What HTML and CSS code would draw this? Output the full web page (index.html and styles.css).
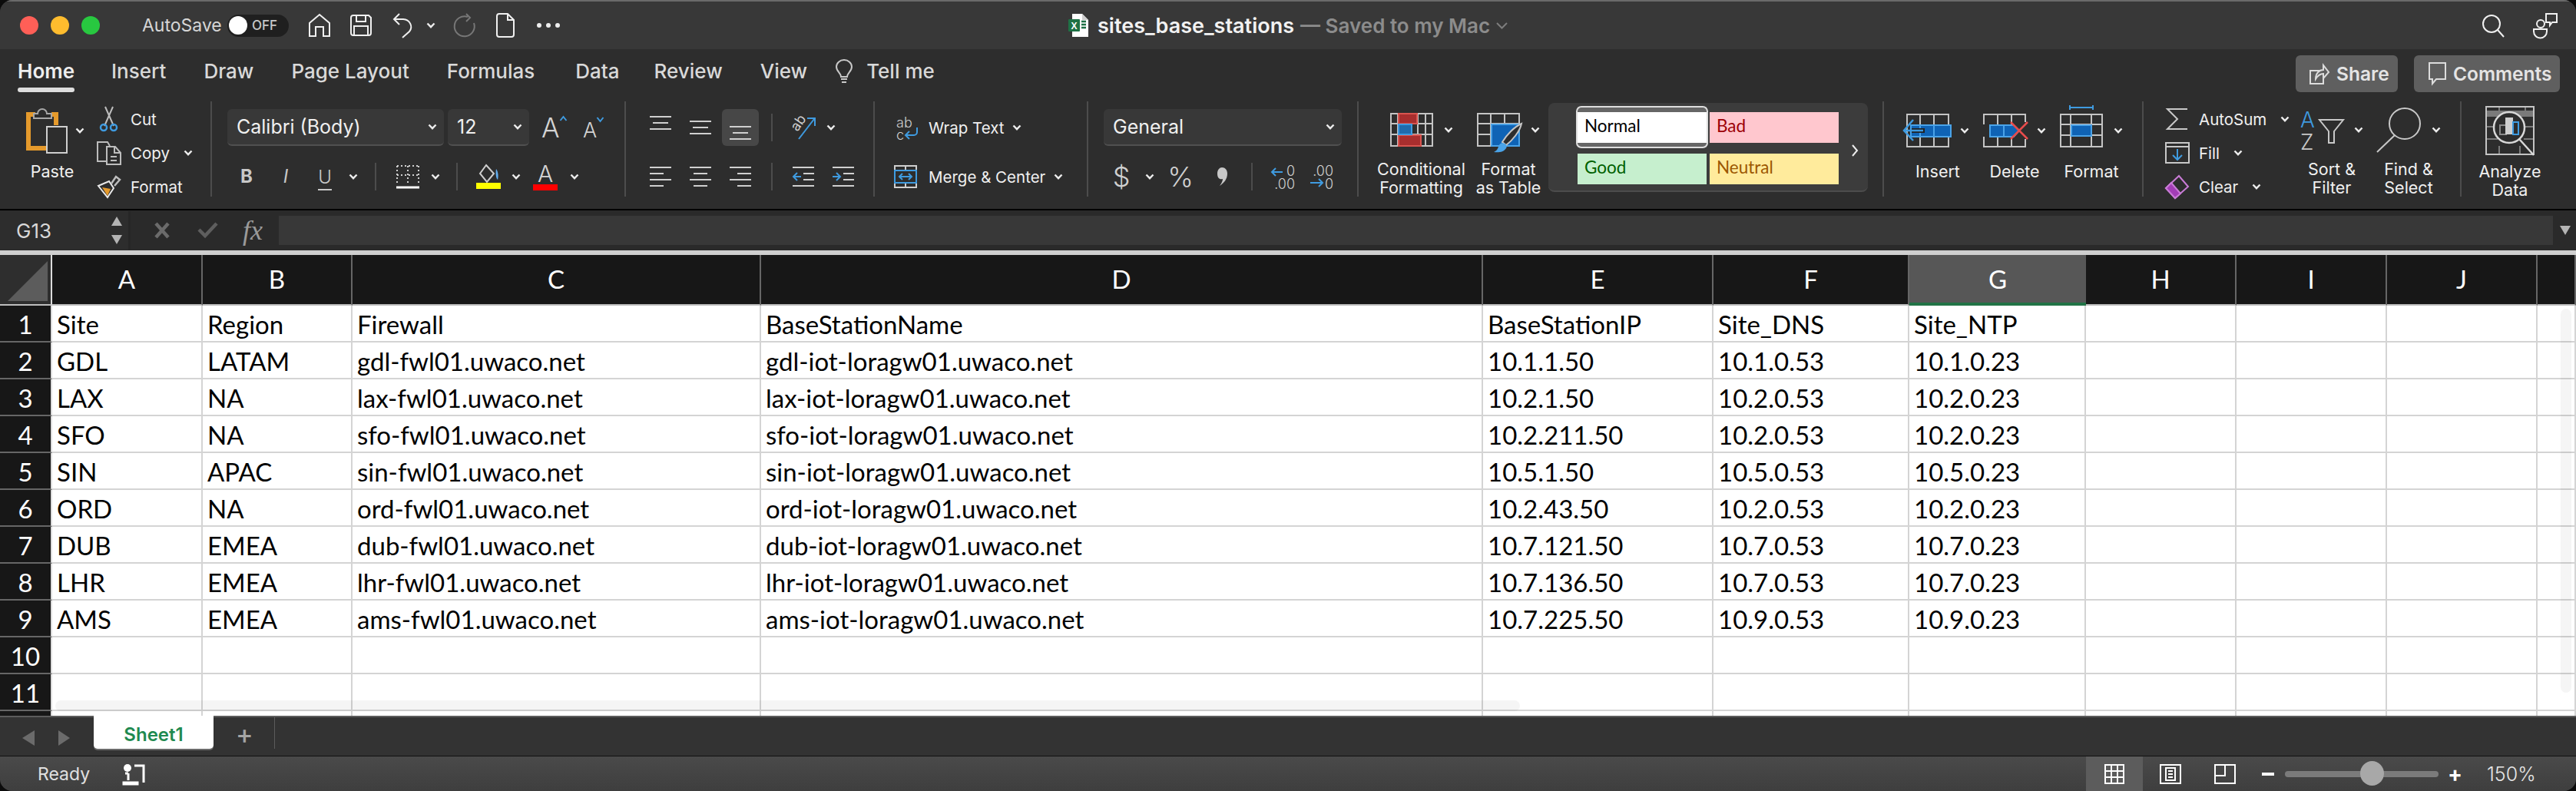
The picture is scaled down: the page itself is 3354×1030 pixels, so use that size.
FILE: index.html
```html
<!DOCTYPE html>
<html lang="en">
<head>
    <meta charset="UTF-8">
    <meta name="viewport" content="width=device-width, initial-scale=1.0">
    <title>sites_base_stations</title>
    <link rel="stylesheet" href="styles.css">
</head>
<body>
<svg class="sprite" aria-hidden="true">
    <symbol id="chev" viewBox="0 0 12 8"><path d="M1.5 1.5 6 6.2l4.5-4.7" fill="none" stroke="#ececec" stroke-width="2.4"/></symbol>
    <symbol id="al-lines" viewBox="0 0 28 18"><path d="M0 1h28M4 9h20M0 17h28" fill="none" stroke="#cfcfcf" stroke-width="2"/></symbol>
    <symbol id="al-left" viewBox="0 0 28 26"><path d="M0 1h28M0 9h18M0 17h28M0 25h18" fill="none" stroke="#cfcfcf" stroke-width="2"/></symbol>
    <symbol id="al-center" viewBox="0 0 28 26"><path d="M0 1h28M5 9h18M0 17h28M5 25h18" fill="none" stroke="#cfcfcf" stroke-width="2"/></symbol>
    <symbol id="al-right" viewBox="0 0 28 26"><path d="M0 1h28M10 9h18M0 17h28M10 25h18" fill="none" stroke="#cfcfcf" stroke-width="2"/></symbol>
</svg>

<div class="window">

    <!-- Title bar -->
    <header class="titlebar">
        <div class="lights"><i class="red"></i><i class="yellow"></i><i class="green"></i></div>
        <span class="autosave">AutoSave</span>
        <span class="toggle"><i></i><b>OFF</b></span>
        <svg class="qa home" width="28" height="30" viewBox="0 0 28 30"><path d="M1 29V12L14 1l13 11v17h-8V17H9v12z"/></svg>
        <svg class="qa save" width="28" height="28" viewBox="0 0 28 28"><path d="M4 1h20l3 3v20a3 3 0 0 1-3 3H4a3 3 0 0 1-3-3V4a3 3 0 0 1 3-3zM8 1v8h12V1M5 27V15h18v12"/></svg>
        <svg class="qa undo" width="27" height="32" viewBox="0 0 27 32"><path d="M9 1 2 8l7 7M2 8h12a11 10 0 0 1 8 16l-9 8"/></svg>
        <svg class="chev qa-chev"><use href="#chev"/></svg>
        <svg class="qa redo" width="29" height="30" viewBox="0 0 29 30"><path d="M19 4a13 13 0 1 0 8 8M17 0l5 5-5 5"/></svg>
        <svg class="qa newdoc" width="24" height="32" viewBox="0 0 24 32"><path d="M4 1h11l8 8v19a3 3 0 0 1-3 3H4a3 3 0 0 1-3-3V4a3 3 0 0 1 3-3zM15 1v8h8"/></svg>
        <span class="dots"><i></i><i></i><i></i></span>

        <svg class="doc-icon" width="26" height="30" viewBox="0 0 26 30">
            <path d="M5 0h13l8 8v22H5z" fill="#fff"/>
            <path d="M18 0v8h8z" fill="#cfcfcf"/>
            <rect x="0" y="7" width="15" height="16" rx="1" fill="#1e7145"/>
            <text x="7.500" y="19.500" class="doc-x">X</text>
            <path d="M17 10h6M17 14h6M17 18h6" stroke="#1e7145" stroke-width="2.500"/>
        </svg>
        <span class="doc-name">sites_base_stations</span>
        <span class="doc-state">— Saved to my Mac</span>
        <svg class="doc-chev" width="15" height="9" viewBox="0 0 15 9"><path d="M1 1l6.500 6.500L14 1" fill="none" stroke="#7d7d7d" stroke-width="2"/></svg>

        <div class="title-right">
            <svg class="qa" width="29" height="29" viewBox="0 0 29 29"><circle cx="12" cy="12" r="11"/><path d="M20 20l8 9"/></svg>
            <svg class="qa" width="32" height="32" viewBox="0 0 32 32"><circle cx="10" cy="14" r="5"/><path d="M1 21h17v3a8 8 0 0 1-17 0zM17 1h14v11h-6l-3 4v-4h-5z"/></svg>
        </div>
    </header>

    <!-- Ribbon -->
    <section class="ribbon">
        <nav class="tabs">
            <span class="tab active">Home</span>
            <span class="tab">Insert</span>
            <span class="tab">Draw</span>
            <span class="tab">Page Layout</span>
            <span class="tab tab-formulas">Formulas</span>
            <span class="tab tab-data">Data</span>
            <span class="tab">Review</span>
            <span class="tab">View</span>
            <svg class="bulb" width="22" height="30" viewBox="0 0 22 30"><path d="M7 22c0-5-6-7-6-13a10 9 0 0 1 20 0c0 6-6 8-6 13zM7 25h8M8 29h6"/></svg>
            <span class="tab tell">Tell me</span>
            <div class="share-btns">
                <button class="pill share">
                    <svg width="26" height="30" viewBox="0 0 26 30"><path d="M13 11H1v17h17v-8M8 22c0-8 5-12 10-12V4l7 9-7 8v-6c-4 0-7 2-10 7z"/></svg>Share
                </button>
                <button class="pill comments">
                    <svg width="24" height="30" viewBox="0 0 24 30"><path d="M2 1h21v21H11l-5 6v-6H2z"/></svg>Comments
                </button>
            </div>
        </nav>

        <div class="tools">

            <!-- Clipboard -->
            <div class="group g-clip">
                <div class="big paste">
                    <div class="big-top">
                        <svg class="tall" width="54" height="59" viewBox="0 0 54 59">
                            <path d="M12 8H3v44h26M33 8h6v14" fill="none" stroke="#e59a2c" stroke-width="6"/>
                            <path d="M10 13V7h5a6 6 0 0 1 12 0h6v6z" stroke="#a8a8a8" stroke-width="2" fill="#2d2d2d"/>
                            <rect x="27" y="24" width="26" height="34" stroke="#cfcfcf" stroke-width="2" fill="#2d2d2d"/>
                        </svg>
                        <svg class="chev"><use href="#chev"/></svg>
                    </div>
                    <span class="label">Paste</span>
                </div>
                <div class="mini-list">
                    <div class="mini">
                        <svg class="mini-ic" width="32" height="32" viewBox="0 0 32 32">
                            <path d="M11 0l11 25M21 0 10 25" stroke="#bdbdbd" stroke-width="2"/>
                            <circle cx="9" cy="27" r="4" stroke="#3f9be0" stroke-width="2.500"/>
                            <circle cx="22" cy="27" r="4" stroke="#3f9be0" stroke-width="2.500"/>
                        </svg>
                        <span>Cut</span>
                    </div>
                    <div class="mini">
                        <svg class="mini-ic" width="32" height="31" viewBox="0 0 32 31">
                            <path d="M12 26H1V1h13l3 5M13 7h11l7 8v15H13zM23 7v8h8M18 20h8M18 25h8" stroke="#bdbdbd" stroke-width="2"/>
                        </svg>
                        <span>Copy</span>
                        <svg class="chev"><use href="#chev"/></svg>
                    </div>
                    <div class="mini">
                        <svg class="mini-ic" width="32" height="30" viewBox="0 0 32 30">
                            <path d="M2 14 16 8l6 9-8 12z" fill="#2d2d2d" stroke="#e8e8e8" stroke-width="2"/>
                            <path d="M7 16l11 2-4 9z" fill="#e59a2c"/>
                            <path d="M19 11l6-9 5 4-7 8" stroke="#bdbdbd" stroke-width="2.500"/>
                        </svg>
                        <span>Format</span>
                    </div>
                </div>
            </div>

            <!-- Font -->
            <div class="group stack g-font">
                <div class="row-font-1">
                    <div class="combo font-name"><span>Calibri (Body)</span><svg class="chev"><use href="#chev"/></svg></div>
                    <div class="combo font-size"><span>12</span><svg class="chev"><use href="#chev"/></svg></div>
                    <span class="grow">A<svg width="9" height="7" viewBox="0 0 9 7"><path d="M.5 6l4-5 4 5" fill="none" stroke="#3f9be0" stroke-width="2"/></svg></span>
                    <span class="shrink">A<svg width="9" height="7" viewBox="0 0 9 7"><path d="M.5 1l4 5 4-5" fill="none" stroke="#3f9be0" stroke-width="2"/></svg></span>
                </div>
                <div class="row-font-2">
                    <span class="fmt fmt-b">B</span>
                    <span class="fmt fmt-i">I</span>
                    <span class="fmt fmt-u">U</span>
                    <svg class="chev"><use href="#chev"/></svg>
                    <i class="vsep"></i>
                    <svg width="30" height="30" viewBox="0 0 30 30">
                        <path d="M1 1h28M1 1v24M15 1v24M29 1v24M1 13h28" fill="none" stroke="#cfcfcf" stroke-width="2" stroke-dasharray="2 3"/>
                        <path d="M0 29h30" stroke="#fff" stroke-width="3"/>
                    </svg>
                    <svg class="chev"><use href="#chev"/></svg>
                    <i class="vsep"></i>
                    <svg width="32" height="32" viewBox="0 0 32 32">
                        <path d="M13 1l10 11-9 11-9-11z" fill="none" stroke="#cfcfcf" stroke-width="2"/>
                        <path d="M26 6c3 4 3 10 2 14-2-1-3-8-2-14z" fill="#62aef0"/>
                        <rect y="24" width="32" height="8" fill="#ffff00"/>
                    </svg>
                    <svg class="chev"><use href="#chev"/></svg>
                    <span class="color-a">A<i></i></span>
                    <svg class="chev"><use href="#chev"/></svg>
                </div>
            </div>

            <!-- Alignment -->
            <div class="group stack g-align">
                <div class="row-align-1">
                    <svg class="nudge-top" width="28" height="18"><use href="#al-lines"/></svg>
                    <svg class="nudge-mid" width="28" height="18"><use href="#al-lines"/></svg>
                    <span class="selected"><svg width="28" height="18"><use href="#al-lines"/></svg></span>
                    <i class="vsep"></i>
                    <svg width="34" height="30" viewBox="0 0 34 30">
                        <text x="3" y="19" class="orient" transform="rotate(-55 8 14)">ab</text>
                        <path d="M11 30 31 4M22 3l10 0v10" fill="none" stroke="#3f9be0" stroke-width="2"/>
                    </svg>
                    <svg class="chev"><use href="#chev"/></svg>
                </div>
                <div class="row-align-2">
                    <svg width="28" height="26"><use href="#al-left"/></svg>
                    <svg width="28" height="26"><use href="#al-center"/></svg>
                    <svg width="28" height="26"><use href="#al-right"/></svg>
                    <i class="vsep"></i>
                    <svg width="28" height="26" viewBox="0 0 28 26">
                        <path d="M0 1h28M14 9h14M14 17h14M0 25h28" fill="none" stroke="#cfcfcf" stroke-width="2"/>
                        <path d="M11 13H1m5-5-5 5 5 5" fill="none" stroke="#3f9be0" stroke-width="2"/>
                    </svg>
                    <svg width="28" height="26" viewBox="0 0 28 26">
                        <path d="M0 1h28M14 9h14M14 17h14M0 25h28" fill="none" stroke="#cfcfcf" stroke-width="2"/>
                        <path d="M0 13h10m-5-5 5 5-5 5" fill="none" stroke="#3f9be0" stroke-width="2"/>
                    </svg>
                </div>
            </div>

            <!-- Wrap and merge -->
            <div class="group stack g-wrap">
                <div class="wrap-row">
                    <svg class="wrap-ic" width="30" height="30" viewBox="0 0 30 30">
                        <text x="3" y="15" class="wrap-txt">ab</text>
                        <text x="3" y="31" class="wrap-txt">c</text>
                        <path d="M30 15v6a4 4 0 0 1-4 4H15m5-5-5 5 5 5" fill="none" stroke="#3f9be0" stroke-width="2"/>
                    </svg>
                    <span>Wrap Text</span>
                    <svg class="chev"><use href="#chev"/></svg>
                </div>
                <div class="wrap-row">
                    <svg class="wrap-ic" width="30" height="30" viewBox="0 0 30 30">
                        <path d="M1 1h28v28H1zM15 1v6M15 23v6" fill="none" stroke="#cfcfcf" stroke-width="2"/>
                        <path d="M1 7h28v16H1zM7 15h16M11 11l-4 4 4 4M19 11l4 4-4 4" fill="none" stroke="#3f9be0" stroke-width="2"/>
                    </svg>
                    <span>Merge &amp; Center</span>
                    <svg class="chev"><use href="#chev"/></svg>
                </div>
            </div>

            <!-- Number -->
            <div class="group stack g-number">
                <div class="combo number-format"><span>General</span><svg class="chev"><use href="#chev"/></svg></div>
                <div class="row-number">
                    <span class="num-sym">$</span>
                    <svg class="chev"><use href="#chev"/></svg>
                    <span class="num-sym">%</span>
                    <svg width="14" height="24" viewBox="0 0 14 24"><path d="M7 0c4 0 7 3 7 8 0 7-4 12-10 16 3-4 4-7 4-9-4 1-7-1-7-7 0-5 3-8 6-8z" fill="#c8c8c8"/></svg>
                    <i class="vsep"></i>
                    <svg width="32" height="30" viewBox="0 0 32 30">
                        <text x="32" y="14" class="dec" text-anchor="end">0</text>
                        <text x="32" y="31" class="dec" text-anchor="end">.00</text>
                        <path d="M16 9H2m5-5L2 9l5 5" fill="none" stroke="#3f9be0" stroke-width="2"/>
                    </svg>
                    <svg width="32" height="30" viewBox="0 0 32 30">
                        <text x="30" y="14" class="dec" text-anchor="end">.00</text>
                        <text x="30" y="31" class="dec" text-anchor="end">0</text>
                        <path d="M0 23h16m-5-5 5 5-5 5" fill="none" stroke="#3f9be0" stroke-width="2"/>
                    </svg>
                </div>
            </div>

            <!-- Styles -->
            <div class="group g-styles">
                <div class="big wide">
                    <div class="big-top">
                        <svg width="56" height="44" viewBox="0 0 56 44">
                            <path d="M1 1h54v42H1zM36 1v42M46 1v42M1 14h54M1 28h54M10 1v42" fill="none" stroke="#c4c4c4" stroke-width="2"/>
                            <path d="M11 1h24v13H11zM11 29h29v14H11z" fill="#a82e2e" stroke="#d9544f" stroke-width="2"/>
                            <rect x="11" y="15" width="17" height="13" fill="#1f6bad" stroke="#3f9be0" stroke-width="2"/>
                        </svg>
                        <svg class="chev"><use href="#chev"/></svg>
                    </div>
                    <span class="label">Conditional<br>Formatting</span>
                </div>
                <div class="big narrow">
                    <div class="big-top">
                        <svg width="56" height="44" viewBox="0 0 56 44">
                            <path d="M1 1h54v42H1zM18 1v42M36 1v42M1 14h54M1 28h54" fill="none" stroke="#c4c4c4" stroke-width="2"/>
                            <rect x="19" y="15" width="36" height="28" fill="#0f63b5" stroke="#4aa3e8" stroke-width="2"/>
                            <path d="M58 14c-2 10-12 22-20 28l-5-4c6-10 16-20 25-24z" fill="#2d2d2d" stroke="#c4c4c4" stroke-width="2"/>
                            <path d="M33 39c5 1 7 4 5 7-3 5-10 6-16 5 4-2 5-4 6-7 1-3 2-4 5-5z" fill="#4aa3e8"/>
                        </svg>
                        <svg class="chev"><use href="#chev"/></svg>
                    </div>
                    <span class="label">Format<br>as Table</span>
                </div>
                <div class="gallery">
                    <div class="gallery-grid">
                        <span class="cell-style st-normal">Normal</span>
                        <span class="cell-style st-bad">Bad</span>
                        <span class="cell-style st-good">Good</span>
                        <span class="cell-style st-neutral">Neutral</span>
                    </div>
                    <svg class="gallery-more" width="9" height="16" viewBox="0 0 9 16"><path d="M1 1l6 7-6 7" fill="none" stroke="#eee" stroke-width="2"/></svg>
                </div>
            </div>

            <!-- Cells -->
            <div class="group g-cells">
                <div class="big">
                    <div class="big-top">
                        <svg width="56" height="44" viewBox="0 0 56 44">
                            <path d="M1 1h54v42H1zM18 1v42M36 1v42" fill="none" stroke="#c4c4c4" stroke-width="2"/>
                            <rect x="6" y="15" width="52" height="15" fill="#0f63b5" stroke="#4aa3e8" stroke-width="2"/>
                            <path d="M36 15v15M18 15v15" stroke="#4aa3e8" stroke-width="2"/>
                            <path d="M7 19h17v6H7z" fill="#222"/>
                            <path d="M22 22H-3M9 8-3 22l12 13" fill="none" stroke="#3f9be0" stroke-width="2.500"/>
                        </svg>
                        <svg class="chev"><use href="#chev"/></svg>
                    </div>
                    <span class="label">Insert</span>
                </div>
                <div class="big">
                    <div class="big-top">
                        <svg width="56" height="44" viewBox="0 0 56 44">
                            <path d="M1 14V1h54v10M1 30v13h54V33M19 1v13M37 1v13M19 30v13M37 30v13" fill="none" stroke="#c4c4c4" stroke-width="2"/>
                            <path d="M9 15h31l7 7-7 8H9z" fill="#0f63b5" stroke="#4aa3e8" stroke-width="2"/>
                            <path d="M27 15v15" stroke="#4aa3e8" stroke-width="2"/>
                            <path d="M36 11l22 22M58 11 36 33" stroke="#e84c4c" stroke-width="2.500"/>
                        </svg>
                        <svg class="chev"><use href="#chev"/></svg>
                    </div>
                    <span class="label">Delete</span>
                </div>
                <div class="big">
                    <div class="big-top">
                        <svg width="56" height="44" viewBox="0 0 56 44">
                            <path d="M1 1h54v42H1zM14 1v42M41 1v42M1 14h54M1 28h54" fill="none" stroke="#c4c4c4" stroke-width="2"/>
                            <rect x="15" y="15" width="26" height="14" fill="#0f63b5" stroke="#4aa3e8" stroke-width="2"/>
                            <path d="M13-8h30M13-11v6M43-11v6" fill="none" stroke="#3f9be0" stroke-width="2"/>
                        </svg>
                        <svg class="chev"><use href="#chev"/></svg>
                    </div>
                    <span class="label">Format</span>
                </div>
            </div>

            <!-- Editing -->
            <div class="group g-edit">
                <div class="mini-list edit-list">
                    <div class="mini">
                        <svg class="mini-ic" width="32" height="28" viewBox="0 0 32 28"><path d="M29 1H3l13 13L3 27h26" stroke="#c8c8c8" stroke-width="2"/></svg>
                        <span>AutoSum</span>
                        <svg class="chev"><use href="#chev"/></svg>
                    </div>
                    <div class="mini">
                        <svg class="mini-ic" width="32" height="28" viewBox="0 0 32 28">
                            <path d="M1 1h30v26H1zM1 6h30" stroke="#c8c8c8" stroke-width="2"/>
                            <path d="M16 9v14m-6-6 6 6 6-6" stroke="#3f9be0" stroke-width="2"/>
                        </svg>
                        <span>Fill</span>
                        <svg class="chev"><use href="#chev"/></svg>
                    </div>
                    <div class="mini">
                        <svg class="mini-ic" width="32" height="30" viewBox="0 0 32 30">
                            <path d="M1 17 18 1l12 14-17 15z" stroke="#c97bd6" stroke-width="2"/>
                            <path d="M1 17l7-7 12 14-7 6z" fill="#a23db5" stroke="#c97bd6" stroke-width="2"/>
                        </svg>
                        <span>Clear</span>
                        <svg class="chev"><use href="#chev"/></svg>
                    </div>
                </div>
                <div class="big">
                    <div class="big-top">
                        <svg class="tall" width="56" height="52" viewBox="0 0 56 52">
                            <text x="0" y="23" class="sort-a">A</text>
                            <text x="0" y="52" class="sort-z">Z</text>
                            <path d="M25 13h31L44 28v15h-7V28z" fill="none" stroke="#c8c8c8" stroke-width="2"/>
                        </svg>
                        <svg class="chev"><use href="#chev"/></svg>
                    </div>
                    <span class="label">Sort &amp;<br>Filter</span>
                </div>
                <div class="big">
                    <div class="big-top">
                        <svg class="tall" width="58" height="58" viewBox="0 0 58 58"><circle cx="37" cy="21" r="20" fill="none" stroke="#c8c8c8" stroke-width="2"/><path d="M24 36 1 58" stroke="#c8c8c8" stroke-width="2"/></svg>
                        <svg class="chev"><use href="#chev"/></svg>
                    </div>
                    <span class="label">Find &amp;<br>Select</span>
                </div>
            </div>

            <!-- Analysis -->
            <div class="group g-analyze">
                <div class="big">
                    <div class="big-top">
                        <svg class="tall" width="64" height="64" viewBox="0 0 64 64">
                            <path d="M1 1h62v62H1z" fill="none" stroke="#c4c4c4" stroke-width="2"/>
                            <path d="M2 10h60" stroke="#7a7a7a" stroke-width="8"/>
                            <path d="M2 27h10M2 43h14M18 2v12M52 2v12M45 52v10M18 52v10M50 27h12M50 43h12" stroke="#7a7a7a" stroke-width="2"/>
                            <circle cx="31" cy="28" r="20" fill="#2d2d2d" stroke="#d8d8d8" stroke-width="2.500"/>
                            <path d="M44 43l19 21" stroke="#d8d8d8" stroke-width="2.500"/>
                            <rect x="19" y="25" width="8" height="12" fill="none" stroke="#8a8a8a" stroke-width="2"/>
                            <rect x="26" y="15" width="10" height="22" fill="#cfcfcf"/>
                            <rect x="36" y="21" width="7" height="16" fill="#2d2d2d" stroke="#3f9be0" stroke-width="2"/>
                        </svg>
                    </div>
                    <span class="label">Analyze<br>Data</span>
                </div>
            </div>
        </div>
    </section>

    <!-- Formula bar -->
    <section class="formula-bar">
        <div class="name-box">
            <span>G13</span>
            <div class="name-arrows"><i class="tri-up"></i><i class="tri-down"></i></div>
        </div>
        <svg class="fb-cross" width="20" height="20" viewBox="0 0 20 20"><path d="M2 1l16 18M18 1 2 19" stroke="#6b6b6b" stroke-width="4.500"/></svg>
        <svg class="fb-check" width="27" height="20" viewBox="0 0 27 20"><path d="M2 9l8 8L25 1" fill="none" stroke="#5e5e5e" stroke-width="4.500"/></svg>
        <span class="fx">fx</span>
        <div class="fb-input"></div>
        <i class="tri-down fb-drop"></i>
    </section>

    <!-- Sheet -->
    <main class="sheet">
        <div class="row head">
            <div class="corner"><i></i></div>
            <div>A</div><div>B</div><div>C</div><div>D</div><div>E</div><div>F</div><div class="sel">G</div><div>H</div><div>I</div><div>J</div><div></div>
        </div>
        <div class="row"><div class="rn">1</div><div>Site</div><div>Region</div><div>Firewall</div><div>BaseStationName</div><div>BaseStationIP</div><div>Site_DNS</div><div>Site_NTP</div><div></div><div></div><div></div><div></div></div>
        <div class="row"><div class="rn">2</div><div>GDL</div><div>LATAM</div><div>gdl-fwl01.uwaco.net</div><div>gdl-iot-loragw01.uwaco.net</div><div>10.1.1.50</div><div>10.1.0.53</div><div>10.1.0.23</div><div></div><div></div><div></div><div></div></div>
        <div class="row"><div class="rn">3</div><div>LAX</div><div>NA</div><div>lax-fwl01.uwaco.net</div><div>lax-iot-loragw01.uwaco.net</div><div>10.2.1.50</div><div>10.2.0.53</div><div>10.2.0.23</div><div></div><div></div><div></div><div></div></div>
        <div class="row"><div class="rn">4</div><div>SFO</div><div>NA</div><div>sfo-fwl01.uwaco.net</div><div>sfo-iot-loragw01.uwaco.net</div><div>10.2.211.50</div><div>10.2.0.53</div><div>10.2.0.23</div><div></div><div></div><div></div><div></div></div>
        <div class="row"><div class="rn">5</div><div>SIN</div><div>APAC</div><div>sin-fwl01.uwaco.net</div><div>sin-iot-loragw01.uwaco.net</div><div>10.5.1.50</div><div>10.5.0.53</div><div>10.5.0.23</div><div></div><div></div><div></div><div></div></div>
        <div class="row"><div class="rn">6</div><div>ORD</div><div>NA</div><div>ord-fwl01.uwaco.net</div><div>ord-iot-loragw01.uwaco.net</div><div>10.2.43.50</div><div>10.2.0.53</div><div>10.2.0.23</div><div></div><div></div><div></div><div></div></div>
        <div class="row"><div class="rn">7</div><div>DUB</div><div>EMEA</div><div>dub-fwl01.uwaco.net</div><div>dub-iot-loragw01.uwaco.net</div><div>10.7.121.50</div><div>10.7.0.53</div><div>10.7.0.23</div><div></div><div></div><div></div><div></div></div>
        <div class="row"><div class="rn">8</div><div>LHR</div><div>EMEA</div><div>lhr-fwl01.uwaco.net</div><div>lhr-iot-loragw01.uwaco.net</div><div>10.7.136.50</div><div>10.7.0.53</div><div>10.7.0.23</div><div></div><div></div><div></div><div></div></div>
        <div class="row"><div class="rn">9</div><div>AMS</div><div>EMEA</div><div>ams-fwl01.uwaco.net</div><div>ams-iot-loragw01.uwaco.net</div><div>10.7.225.50</div><div>10.9.0.53</div><div>10.9.0.23</div><div></div><div></div><div></div><div></div></div>
        <div class="row"><div class="rn">10</div><div></div><div></div><div></div><div></div><div></div><div></div><div></div><div></div><div></div><div></div><div></div></div>
        <div class="row"><div class="rn">11</div><div></div><div></div><div></div><div></div><div></div><div></div><div></div><div></div><div></div><div></div><div></div></div>
        <div class="row"><div class="rn"></div><div></div><div></div><div></div><div></div><div></div><div></div><div></div><div></div><div></div><div></div><div></div></div>
        <div class="scroll-h"></div>
        <div class="scroll-v"></div>
    </main>

    <!-- Sheet tabs -->
    <section class="sheet-tabs">
        <i class="tri-left"></i>
        <i class="tri-right"></i>
        <span class="sheet-tab">Sheet1</span>
        <span class="sheet-add">+</span>
        <i class="sheet-div"></i>
    </section>

    <!-- Status bar -->
    <footer class="statusbar">
        <span class="ready">Ready</span>
        <svg class="macro" width="29" height="27" viewBox="0 0 29 27">
            <circle cx="6" cy="5" r="5" fill="#fff"/>
            <path d="M15 2h12v22M7 12v9M3 12h4M1 24h18v2H1z" fill="none" stroke="#fff" stroke-width="3"/>
        </svg>
        <div class="view-btn current">
            <svg width="26" height="26" viewBox="0 0 26 26"><path d="M1 1h24v24H1zM9 1v24M17 1v24M1 9h24M1 17h24"/></svg>
        </div>
        <div class="view-btn">
            <svg width="28" height="26" viewBox="0 0 28 26"><path d="M1 1h26v24H1zM8 5h12v16H8zM11 9h6M11 13h6M11 17h6"/></svg>
        </div>
        <div class="view-btn">
            <svg width="28" height="26" viewBox="0 0 28 26"><path d="M1 1h26v24H1zM1 15h13V1M14 15V9"/></svg>
        </div>
        <div class="zoom">
            <i class="zoom-minus"></i>
            <div class="zoom-track"><i class="zoom-thumb"></i></div>
            <span class="zoom-plus">+</span>
            <span class="zoom-value">150%</span>
        </div>
    </footer>
</div>
</body>
</html>
```

FILE: styles.css
```css
* {
    box-sizing: border-box;
}

html,
body {
    margin: 0;
    height: 100%;
    background-color: #0c0c0c;
}

body {
    font-family: Inter, 'Noto Sans', sans-serif;
    color: #e6e6e6;
    overflow: hidden;
}

svg {
    overflow: visible;
    flex: none;
    display: block;
}

i {
    display: block;
    font-style: normal;
}

.sprite {
    display: none;
}

.window {
    width: 3354px;
    height: 1030px;
    overflow: hidden;
    position: relative;
    border-radius: 16px;
    display: flex;
    flex-direction: column;
    background-color: #2d2d2d;
}

.chev {
    width: 12px;
    height: 8px;
}

/* Title bar */
.titlebar {
    height: 64px;
    flex: none;
    display: flex;
    align-items: center;
    background-color: #383838;
    border-top: 2px solid #6a6a6a;
}

.lights {
    display: flex;
    gap: 16px;
    margin-left: 26px;
}

.lights i {
    width: 24px;
    height: 24px;
    border-radius: 50%;
}

.lights .red {
    background-color: #ff5f57;
}

.lights .yellow {
    background-color: #febc2e;
}

.lights .green {
    background-color: #28c840;
}

.autosave {
    margin-left: 55px;
    font-size: 23px;
    width: 111px;
    color: #d6d6d6;
}

.toggle {
    width: 80px;
    height: 29px;
    border-radius: 15px;
    background-color: #1f1f1f;
    display: flex;
    align-items: center;
    padding-left: 2px;
}

.toggle i {
    width: 24px;
    height: 24px;
    border-radius: 50%;
    background-color: #fff;
}

.toggle b {
    margin-left: 6px;
    font-size: 17px;
    font-weight: 500;
    color: #c8c8c8;
}

.qa path,
.qa circle {
    fill: none;
    stroke: #f0f0f0;
    stroke-width: 2;
}

.home {
    margin-left: 26px;
}

.save {
    margin-left: 26px;
}

.undo {
    margin-left: 27px;
}

.qa-chev {
    margin-left: 17px;
}

.redo {
    margin-left: 23px;
}

.redo path {
    stroke: #777;
}

.newdoc {
    margin-left: 27px;
}

.dots {
    display: flex;
    gap: 6px;
    margin-left: 29px;
}

.dots i {
    width: 6px;
    height: 6px;
    border-radius: 50%;
    background-color: #eee;
}

.doc-icon {
    margin-left: 662px;
}

.doc-x {
    font: 700 12px 'Liberation Sans', sans-serif;
    fill: #fff;
    text-anchor: middle;
}

.doc-name {
    margin-left: 12px;
    font-size: 27px;
    font-weight: 600;
    color: #f2f2f2;
}

.doc-state {
    margin-left: 8px;
    font-size: 26px;
    font-weight: 600;
    color: #8c8c8c;
}

.doc-chev {
    margin-left: 8px;
}

.title-right {
    margin-left: auto;
    margin-right: 24px;
    display: flex;
    gap: 37px;
    align-items: center;
}

/* Ribbon tabs */
.ribbon {
    height: 210px;
    flex: none;
    background-color: #2d2d2d;
    border-bottom: 2px solid #000;
}

.tabs {
    height: 68px;
    display: flex;
    align-items: flex-start;
    padding-left: 23px;
}

.tab {
    font-size: 26px;
    line-height: 30px;
    margin: 14px 49px 0 0;
    color: #d9d9d9;
    font-weight: 500;
    position: relative;
}

.tab.active {
    font-weight: 600;
    color: #eeeeee;
    margin-right: 48px;
}

.tab.active::after {
    content: "";
    position: absolute;
    left: 0;
    right: 0;
    top: 36px;
    height: 6px;
    border-radius: 3px;
    background-color: #dedede;
}

.tab.tab-formulas {
    margin-right: 53px;
}

.tab.tab-data {
    margin-right: 45px;
}

.bulb {
    margin-top: 14px;
    margin-left: -12px;
}

.bulb path {
    fill: none;
    stroke: #c8c8c8;
    stroke-width: 2;
}

.tab.tell {
    margin-left: 18px;
}

.share-btns {
    margin-left: auto;
    margin-right: 21px;
    margin-top: 8px;
    display: flex;
    gap: 21px;
}

.pill {
    height: 48px;
    border: none;
    border-radius: 6px;
    background-color: #5f5f5f;
    color: #e4e4e4;
    font: 600 24.500px Inter, sans-serif;
    display: flex;
    align-items: center;
    gap: 9px;
    padding: 0;
}

.pill path {
    fill: none;
    stroke: #dcdcdc;
    stroke-width: 2;
}

.pill.share {
    width: 133px;
    padding-left: 18px;
}

.pill.comments {
    width: 190px;
    padding-left: 18px;
}

/* Ribbon groups */
.tools {
    display: flex;
    height: 124px;
}

.group {
    flex: none;
    height: 124px;
    border-right: 2px solid #4c4c4c;
    font-size: 21px;
    color: #f0f0f0;
}

.stack {
    display: grid;
    grid-template-rows: 48px 36px;
    row-gap: 22px;
    padding-top: 10px;
    align-content: start;
}

.g-clip {
    width: 276px;
    display: flex;
    padding-left: 34px;
    gap: 16px;
}

.g-font {
    width: 539px;
    padding-left: 20px;
}

.g-align {
    width: 324px;
    padding-left: 19px;
}

.g-wrap {
    width: 278px;
    padding-left: 25px;
}

.g-number {
    width: 352px;
    padding-left: 20px;
}

.g-styles {
    width: 684px;
    display: flex;
    padding-left: 25px;
    gap: 15px;
}

.g-cells {
    width: 338px;
    display: flex;
    padding-left: 29px;
    gap: 18px;
}

.g-edit {
    width: 414px;
    display: flex;
    padding-left: 28px;
    gap: 17px;
}

.g-analyze {
    flex: 1;
    border-right: none;
    padding-left: 24px;
}

.g-analyze .big {
    width: 78px;
}

/* Large tools with a label under the icon */
.big {
    display: flex;
    flex-direction: column;
    align-items: center;
    flex: none;
}

.big.wide {
    width: 113px;
}

.big.narrow {
    width: 84px;
}

.big-top {
    height: 76px;
    display: flex;
    align-items: center;
    gap: 14px;
}

.label {
    margin-top: 3px;
    font-size: 21.500px;
    line-height: 24px;
    text-align: center;
    white-space: nowrap;
}

.paste .big-top {
    gap: 10px;
}

.paste .label {
    margin-right: 8px;
}

/* Small tools stacked in three lines */
.mini-list {
    display: grid;
    grid-auto-rows: 44px;
    padding-top: 1px;
}

.edit-list {
    width: 159px;
}

.mini {
    display: flex;
    align-items: center;
    gap: 12px;
    font-size: 20.500px;
    white-space: nowrap;
}

.mini-ic path:not([fill]),
.mini-ic circle {
    fill: none;
}

.mini .chev {
    margin-left: 6px;
}

/* Combos */
.combo {
    height: 48px;
    border-radius: 6px;
    background-color: #383838;
    border-bottom: 2px solid #505050;
    display: flex;
    align-items: center;
    justify-content: space-between;
    padding: 0 9px 0 12px;
    font-size: 25px;
}

.font-name {
    width: 282px;
}

.font-size {
    width: 106px;
}

.number-format {
    width: 310px;
}

.row-font-1 {
    display: flex;
    align-items: center;
    gap: 5px;
}

.grow,
.shrink {
    position: relative;
    font-weight: 300;
    color: #d4d4d4;
    line-height: 1;
}

.grow {
    font-size: 35px;
    margin-left: 11px;
    width: 49px;
}

.shrink {
    font-size: 27px;
    margin-top: 6px;
}

.grow svg,
.shrink svg {
    position: absolute;
    top: 2px;
    left: 24px;
}

.shrink svg {
    left: 18px;
    top: -4px;
}

.row-font-2 {
    display: grid;
    grid-template-columns: 50px 52px 50px 24px 34px 49px 24px 32px 49px 24px 52px 24px;
    justify-items: center;
    align-items: center;
}

.fmt {
    font-size: 24px;
    color: #c8c8c8;
    line-height: 1;
}

.fmt-b {
    font-weight: 700;
}

.fmt-i {
    font-style: italic;
    font-weight: 400;
}

.fmt-u {
    border-bottom: 2px solid #c8c8c8;
    padding-bottom: 3px;
    margin-top: 6px;
    font-weight: 300;
}

.vsep {
    width: 2px;
    height: 36px;
    background-color: #4c4c4c;
}

.color-a {
    font-size: 30px;
    font-weight: 300;
    line-height: 26px;
    color: #d4d4d4;
    text-align: center;
    width: 32px;
}

.color-a i {
    height: 8px;
    background-color: #ff0000;
    margin-top: 1px;
}

.row-align-1 {
    display: grid;
    grid-template-columns: 52px 52px 52px 30px 52px 20px;
    justify-items: center;
    align-items: center;
}

.row-align-2 {
    display: grid;
    grid-template-columns: 52px 52px 52px 30px 52px 52px;
    justify-items: center;
    align-items: center;
}

.nudge-top {
    margin-bottom: 13px;
}

.nudge-mid {
    margin-bottom: 1px;
}

.selected {
    width: 48px;
    height: 48px;
    background-color: #474747;
    border-radius: 6px;
    display: flex;
    align-items: flex-end;
    justify-content: center;
    padding-bottom: 8px;
}

.orient {
    font: 400 18px Inter, sans-serif;
    fill: #cfcfcf;
}

.wrap-row {
    display: flex;
    align-items: center;
    font-size: 20.500px;
    white-space: nowrap;
}

.wrap-ic {
    margin-right: 15px;
}

.wrap-row .chev {
    margin-left: 11px;
}

.wrap-txt {
    font: 300 18px Inter, sans-serif;
    fill: #cfcfcf;
}

.row-number {
    display: grid;
    grid-template-columns: 46px 28px 52px 56px 22px 58px 46px;
    justify-items: center;
    align-items: center;
}

.num-sym {
    font-size: 36px;
    font-weight: 300;
    color: #d0d0d0;
    line-height: 1;
}

.dec {
    font: 300 18px Inter, sans-serif;
    fill: #cfcfcf;
}

.sort-a {
    font: 300 28px Inter, sans-serif;
    fill: #3f9be0;
}

.sort-z {
    font: 300 28px Inter, sans-serif;
    fill: #c8c8c8;
}

/* Style gallery */
.gallery {
    flex: none;
    width: 416px;
    height: 116px;
    margin-top: 2px;
    margin-left: -5px;
    background-color: #3c3c3c;
    border-bottom: 2px solid #4c4c4c;
    border-radius: 8px;
    padding: 12px 0 0 38px;
    display: flex;
}

.gallery-grid {
    display: grid;
    grid-template-columns: 168px 168px;
    grid-auto-rows: 40px;
    column-gap: 4px;
    row-gap: 14px;
}

.gallery-more {
    margin: 42px 0 0 17px;
}

.cell-style {
    font-family: Lato, sans-serif;
    font-size: 22.500px;
    line-height: 36px;
    padding-left: 9px;
}

.st-normal {
    position: relative;
    background-color: #fff;
    color: #000;
    box-shadow: 0 -7px 0 #666, 0 6px 0 #666;
}

.st-normal::before {
    content: "";
    position: absolute;
    inset: -8px -2px -7px -2px;
    border: 2px solid #dedede;
    border-radius: 7px;
}

.st-bad {
    background-color: #ffc7ce;
    color: #9c0006;
}

.st-good {
    background-color: #c6efce;
    color: #006100;
}

.st-neutral {
    background-color: #ffeb9c;
    color: #9c5700;
}

/* Formula bar */
.formula-bar {
    height: 52px;
    flex: none;
    display: flex;
    align-items: center;
    background-color: #2a2a2a;
    position: relative;
}

.name-box {
    width: 170px;
    height: 50px;
    background-color: #2d2d2d;
    border-right: 3px solid #262626;
    display: flex;
    align-items: center;
    padding-left: 21px;
    font-size: 26px;
    color: #d8d8d8;
    justify-content: space-between;
}

.name-arrows {
    display: flex;
    flex-direction: column;
    gap: 12px;
    margin-right: 8px;
}

.tri-up {
    width: 0;
    height: 0;
    border: 7px solid transparent;
    border-top: none;
    border-bottom: 12px solid #b4b4b4;
}

.tri-down {
    width: 0;
    height: 0;
    border: 7px solid transparent;
    border-bottom: none;
    border-top: 12px solid #b4b4b4;
}

.fb-cross {
    margin-left: 31px;
}

.fb-check {
    margin-left: 36px;
}

.fx {
    margin-left: 32px;
    width: 47px;
    font: italic 400 36px 'Liberation Serif', serif;
    color: #9a9a9a;
}

.fb-input {
    width: 2961px;
    height: 38px;
    background-color: #383838;
}

.fb-drop {
    margin-left: 9px;
}

/* Sheet */
.sheet {
    height: 606px;
    flex: none;
    overflow: hidden;
    position: relative;
    background-color: #fff;
    border-top: 6px solid #cfcfcf;
    color: #000;
    font-family: Lato, sans-serif;
    font-size: 33px;
}

.row {
    display: grid;
    grid-template-columns: 68px 196px 195px 532px 940px 300px 255px 230px 196px 196px 196px 50px;
    height: 48px;
}

.row > div {
    border-right: 2px solid #d4d4d4;
    border-bottom: 2px solid #d4d4d4;
    padding-left: 6px;
    line-height: 49px;
    white-space: nowrap;
    overflow: hidden;
}

.row > .rn {
    background-color: #171717;
    color: #fff;
    text-align: center;
    padding-left: 0;
    border-bottom-color: #666;
    border-right-color: #dcdcdc;
}

.row.head {
    height: 66px;
}

.row.head > div {
    background-color: #171717;
    color: #fff;
    text-align: center;
    padding-left: 0;
    line-height: 62px;
    border-right-color: #666;
    border-bottom-color: #bdbdbd;
}

.row.head > .corner {
    background-color: #2e2e2e;
    border-right-color: #dcdcdc;
    position: relative;
}

.corner i {
    position: absolute;
    left: 10px;
    top: 8px;
    width: 52px;
    height: 52px;
    background-color: #5c5c5c;
    clip-path: polygon(100% 0, 100% 100%, 0 100%);
}

.row.head > .sel {
    background-color: #575757;
    border-right: none;
    border-bottom: 4px solid #217346;
}

.scroll-h {
    position: absolute;
    left: 72px;
    top: 580px;
    width: 1907px;
    height: 14px;
    border-radius: 7px;
    background-color: rgba(0, 0, 0, 0.04);
}

.scroll-v {
    position: absolute;
    left: 3334px;
    top: 70px;
    width: 14px;
    height: 500px;
    border-radius: 7px;
    background-color: rgba(0, 0, 0, 0.04);
}

/* Sheet tabs */
.sheet-tabs {
    height: 53px;
    flex: none;
    display: flex;
    align-items: flex-start;
    background-color: #333;
    border-top: 2px solid #5c5c5c;
    border-bottom: 1px solid #111;
    padding-left: 29px;
}

.tri-left,
.tri-right {
    width: 0;
    height: 0;
    margin-top: 17px;
    border-top: 10px solid transparent;
    border-bottom: 10px solid transparent;
}

.tri-left {
    border-right: 16px solid #6b6b6b;
}

.tri-right {
    margin-left: 31px;
    border-left: 15px solid #6b6b6b;
}

.sheet-tab {
    width: 156px;
    height: 43px;
    margin-left: 31px;
    margin-top: -2px;
    background-color: #fff;
    border-radius: 0 0 5px 5px;
    box-shadow: 0 2px 0 #6a6a6a;
    color: #1f8a50;
    font-size: 24px;
    font-weight: 600;
    text-align: center;
    line-height: 50px;
}

.sheet-add {
    margin-left: 29px;
    font-size: 34px;
    line-height: 44px;
    font-weight: 500;
    color: #a5a5a5;
}

.sheet-div {
    width: 1px;
    height: 41px;
    margin-left: 27px;
    background-color: #5c5c5c;
}

/* Status bar */
.statusbar {
    flex: 1;
    display: flex;
    align-items: center;
    background: linear-gradient(#4a4a4a, #3e3e3e);
    padding-left: 49px;
    font-size: 23px;
}

.ready {
    width: 111px;
    color: #e0e0e0;
}

.macro {
    margin-right: 2527px;
}

.view-btn {
    width: 71px;
    height: 46px;
    display: flex;
    align-items: center;
    justify-content: center;
}

.view-btn.current {
    width: 74px;
    background-color: #5c5c5c;
}

.view-btn path {
    fill: none;
    stroke: #fff;
    stroke-width: 2;
}

.zoom {
    display: flex;
    align-items: center;
    margin-left: 13px;
}

.zoom-minus {
    width: 16px;
    height: 4px;
    background-color: #fff;
}

.zoom-track {
    width: 200px;
    height: 8px;
    margin-left: 14px;
    border-radius: 4px;
    background-color: #7b7b7b;
    position: relative;
}

.zoom-thumb {
    position: absolute;
    left: 98px;
    top: -13px;
    width: 31px;
    height: 32px;
    border-radius: 50%;
    background-color: #a8a8a8;
}

.zoom-plus {
    margin-left: 12px;
    font-size: 28px;
    font-weight: 700;
    color: #fff;
    line-height: 1;
}

.zoom-value {
    margin-left: 32px;
    font-size: 25px;
    font-weight: 300;
    color: #e6e6e6;
}
```
